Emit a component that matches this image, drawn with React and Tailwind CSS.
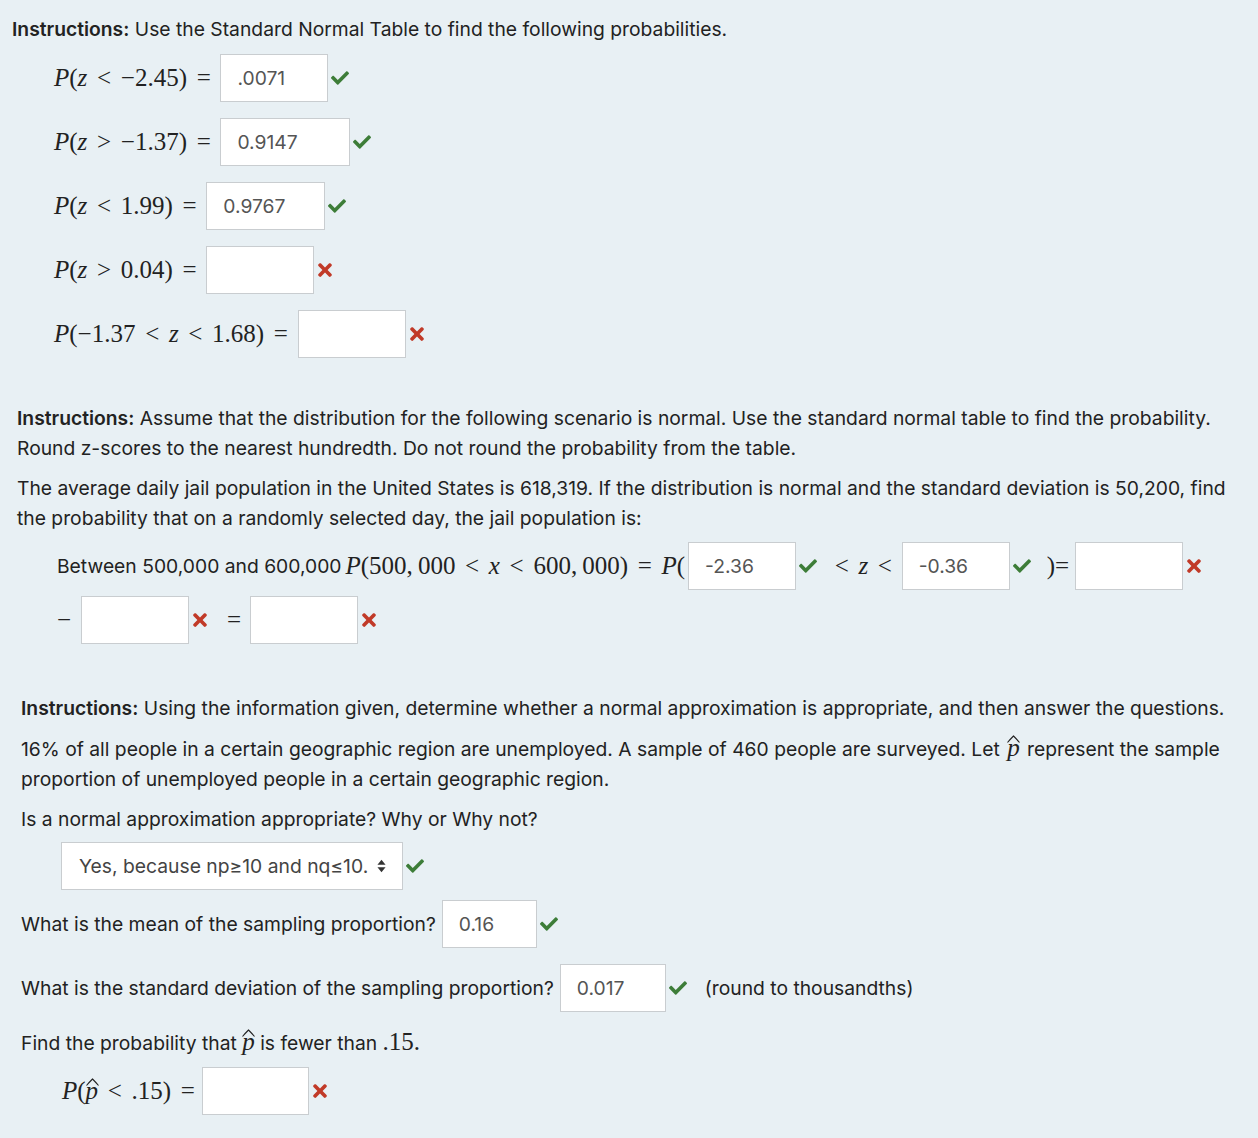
import React from "react";
import { FaCheck, FaTimes } from "react-icons/fa";

const serif = "font-['Liberation_Serif','Times_New_Roman',serif]";

// ---------------- SMALL PIECES ----------------
const Check = () => (
  <FaCheck className="ml-[3px] h-[18px] w-[18px] shrink-0 text-[#3d7d38]" />
);

const Cross = () => (
  <FaTimes className="ml-[4px] h-[20px] w-[14px] shrink-0 text-[#c13a28]" />
);

const Box = ({ value = "", w = "w-[108px]" }) => (
  <div
    className={`flex h-[48px] ${w} shrink-0 items-center border border-[#c9cdd0] bg-white pl-[16px] text-[#555]`}
  >
    {value}
  </div>
);

const Hat = ({ children }) => (
  <span className="relative inline-block leading-none">
    {children}
    <svg
      viewBox="0 0 14 8"
      className="absolute top-[0px] -left-[1px] h-[8px] w-[15px]"
      fill="none"
      stroke="#222"
      strokeWidth="1.1"
    >
      <path d="M1 7.5 Q4 4 7 1 Q10 4 13 7.5" />
    </svg>
  </span>
);

const Math = ({ children, className = "" }) => (
  <span className={`${serif} text-[25px] text-[#222] ${className}`}>{children}</span>
);

// relation sign, spaced like typeset math
const Rel = ({ children }) => (
  <span className="mx-[7px] inline-block w-[0.778em] text-center">{children}</span>
);

// ---------------- PAGE ----------------
const App = () => {
  return (
    <div className="min-h-screen w-[1258px] bg-[#e8f0f4] pb-[30px] font-['Inter',sans-serif] text-[19.3px] leading-[30px] text-[#222]">

      {/* section 1 */}
      <section className="pl-[12px] pt-[14px]">
        <p>
          <b className="font-semibold">Instructions:</b> Use the Standard Normal Table to find the following probabilities.
        </p>

        <div className="mt-[10px] flex flex-col gap-[16px] pl-[42px]">
          <div className="flex items-center">
            <Math>
              <i>P</i>(<i>z</i><Rel>&lt;</Rel>−2.45)<Rel>=</Rel>
            </Math>
            <Box value=".0071" />
            <Check />
          </div>

          <div className="flex items-center">
            <Math>
              <i>P</i>(<i>z</i><Rel>&gt;</Rel>−1.37)<Rel>=</Rel>
            </Math>
            <Box value="0.9147" w="w-[130px]" />
            <Check />
          </div>

          <div className="flex items-center">
            <Math>
              <i>P</i>(<i>z</i><Rel>&lt;</Rel>1.99)<Rel>=</Rel>
            </Math>
            <Box value="0.9767" w="w-[119px]" />
            <Check />
          </div>

          <div className="flex items-center">
            <Math>
              <i>P</i>(<i>z</i><Rel>&gt;</Rel>0.04)<Rel>=</Rel>
            </Math>
            <Box />
            <Cross />
          </div>

          <div className="flex items-center">
            <Math>
              <i>P</i>(−1.37<Rel>&lt;</Rel><i>z</i><Rel>&lt;</Rel>1.68)<Rel>=</Rel>
            </Math>
            <Box />
            <Cross />
          </div>
        </div>
      </section>

      {/* section 2 */}
      <section className="mt-[45px] pl-[17px] pr-[6px]">
        <p>
          <b className="font-semibold">Instructions:</b> Assume that the distribution for the following scenario is normal. Use the standard normal table to find the probability.
          <br />
          Round z-scores to the nearest hundredth. Do not round the probability from the table.
        </p>

        <p className="mt-[10px]">
          The average daily jail population in the United States is 618,319. If the distribution is normal and the standard deviation is 50,200, find
          <br />
          the probability that on a randomly selected day, the jail population is:
        </p>

        <div className="mt-[9px] flex flex-wrap items-center gap-y-[6px] pl-[40px]">
          <span className="mr-[4px]">Between 500,000 and 600,000</span>
          <Math className="mr-[3px]">
            <i>P</i>(500,&#8201;000<Rel>&lt;</Rel><i>x</i><Rel>&lt;</Rel>600,&#8201;000)<Rel>=</Rel><i>P</i>(
          </Math>
          <Box value="-2.36" />
          <Check />
          <Math className="ml-[8px]">
            <Rel>&lt;</Rel><i>z</i><Rel>&lt;</Rel>
          </Math>
          <Box value="-0.36" />
          <Check />
          <Math className="ml-[16px] mr-[6px]">)=</Math>
          <Box />
          <Cross />

          <div className="flex w-full items-center">
            <Math className="mr-[10px]">−</Math>
            <Box />
            <Cross />
            <Math className="ml-[20px] mr-[9px]">=</Math>
            <Box />
            <Cross />
          </div>
        </div>
      </section>

      {/* section 3 */}
      <section className="mt-[49px] pl-[21px] pr-[6px]">
        <p>
          <b className="font-semibold">Instructions:</b> Using the information given, determine whether a normal approximation is appropriate, and then answer the questions.
        </p>

        <p className="mt-[10px]">
          16% of all people in a certain geographic region are unemployed. A sample of 460 people are surveyed. Let{" "}
          <Math className="mx-[2px]">
            <Hat><i>p</i></Hat>
          </Math>{" "}
          represent the sample
          <br />
          proportion of unemployed people in a certain geographic region.
        </p>

        <p className="mt-[10px]">Is a normal approximation appropriate? Why or Why not?</p>

        <div className="mt-[8px] flex items-center pl-[40px]">
          <div className="flex h-[48px] w-[342px] items-center border border-[#c9cdd0] bg-white pl-[17px] text-[#444]">
            <span>Yes, because np≥10 and nq≤10.</span>
            <svg viewBox="0 0 10 14" className="ml-[9px] h-[14px] w-[9px]" fill="#333">
              <path d="M5 0 L9.5 5.5 L0.5 5.5 Z" />
              <path d="M5 14 L9.5 8.5 L0.5 8.5 Z" />
            </svg>
          </div>
          <Check />
        </div>

        <div className="mt-[10px] flex items-center">
          <span className="mr-[6px]">What is the mean of the sampling proportion?</span>
          <Box value="0.16" w="w-[95px]" />
          <Check />
        </div>

        <div className="mt-[16px] flex items-center">
          <span className="mr-[6px]">What is the standard deviation of the sampling proportion?</span>
          <Box value="0.017" w="w-[106px]" />
          <Check />
          <span className="ml-[18px]">(round to thousandths)</span>
        </div>

        <p className="mt-[15px]">
          Find the probability that{" "}
          <Math>
            <Hat><i>p</i></Hat>
          </Math>{" "}
          is fewer than <Math>.15.</Math>
        </p>

        <div className="mt-[9px] flex items-center pl-[41px]">
          <Math className="-mr-[3px]">
            <i>P</i>(<Hat><i>p</i></Hat><Rel>&lt;</Rel>.15)<Rel>=</Rel>
          </Math>
          <Box value="" w="w-[107px]" />
          <Cross />
        </div>
      </section>

    </div>
  );
};

export default App;
